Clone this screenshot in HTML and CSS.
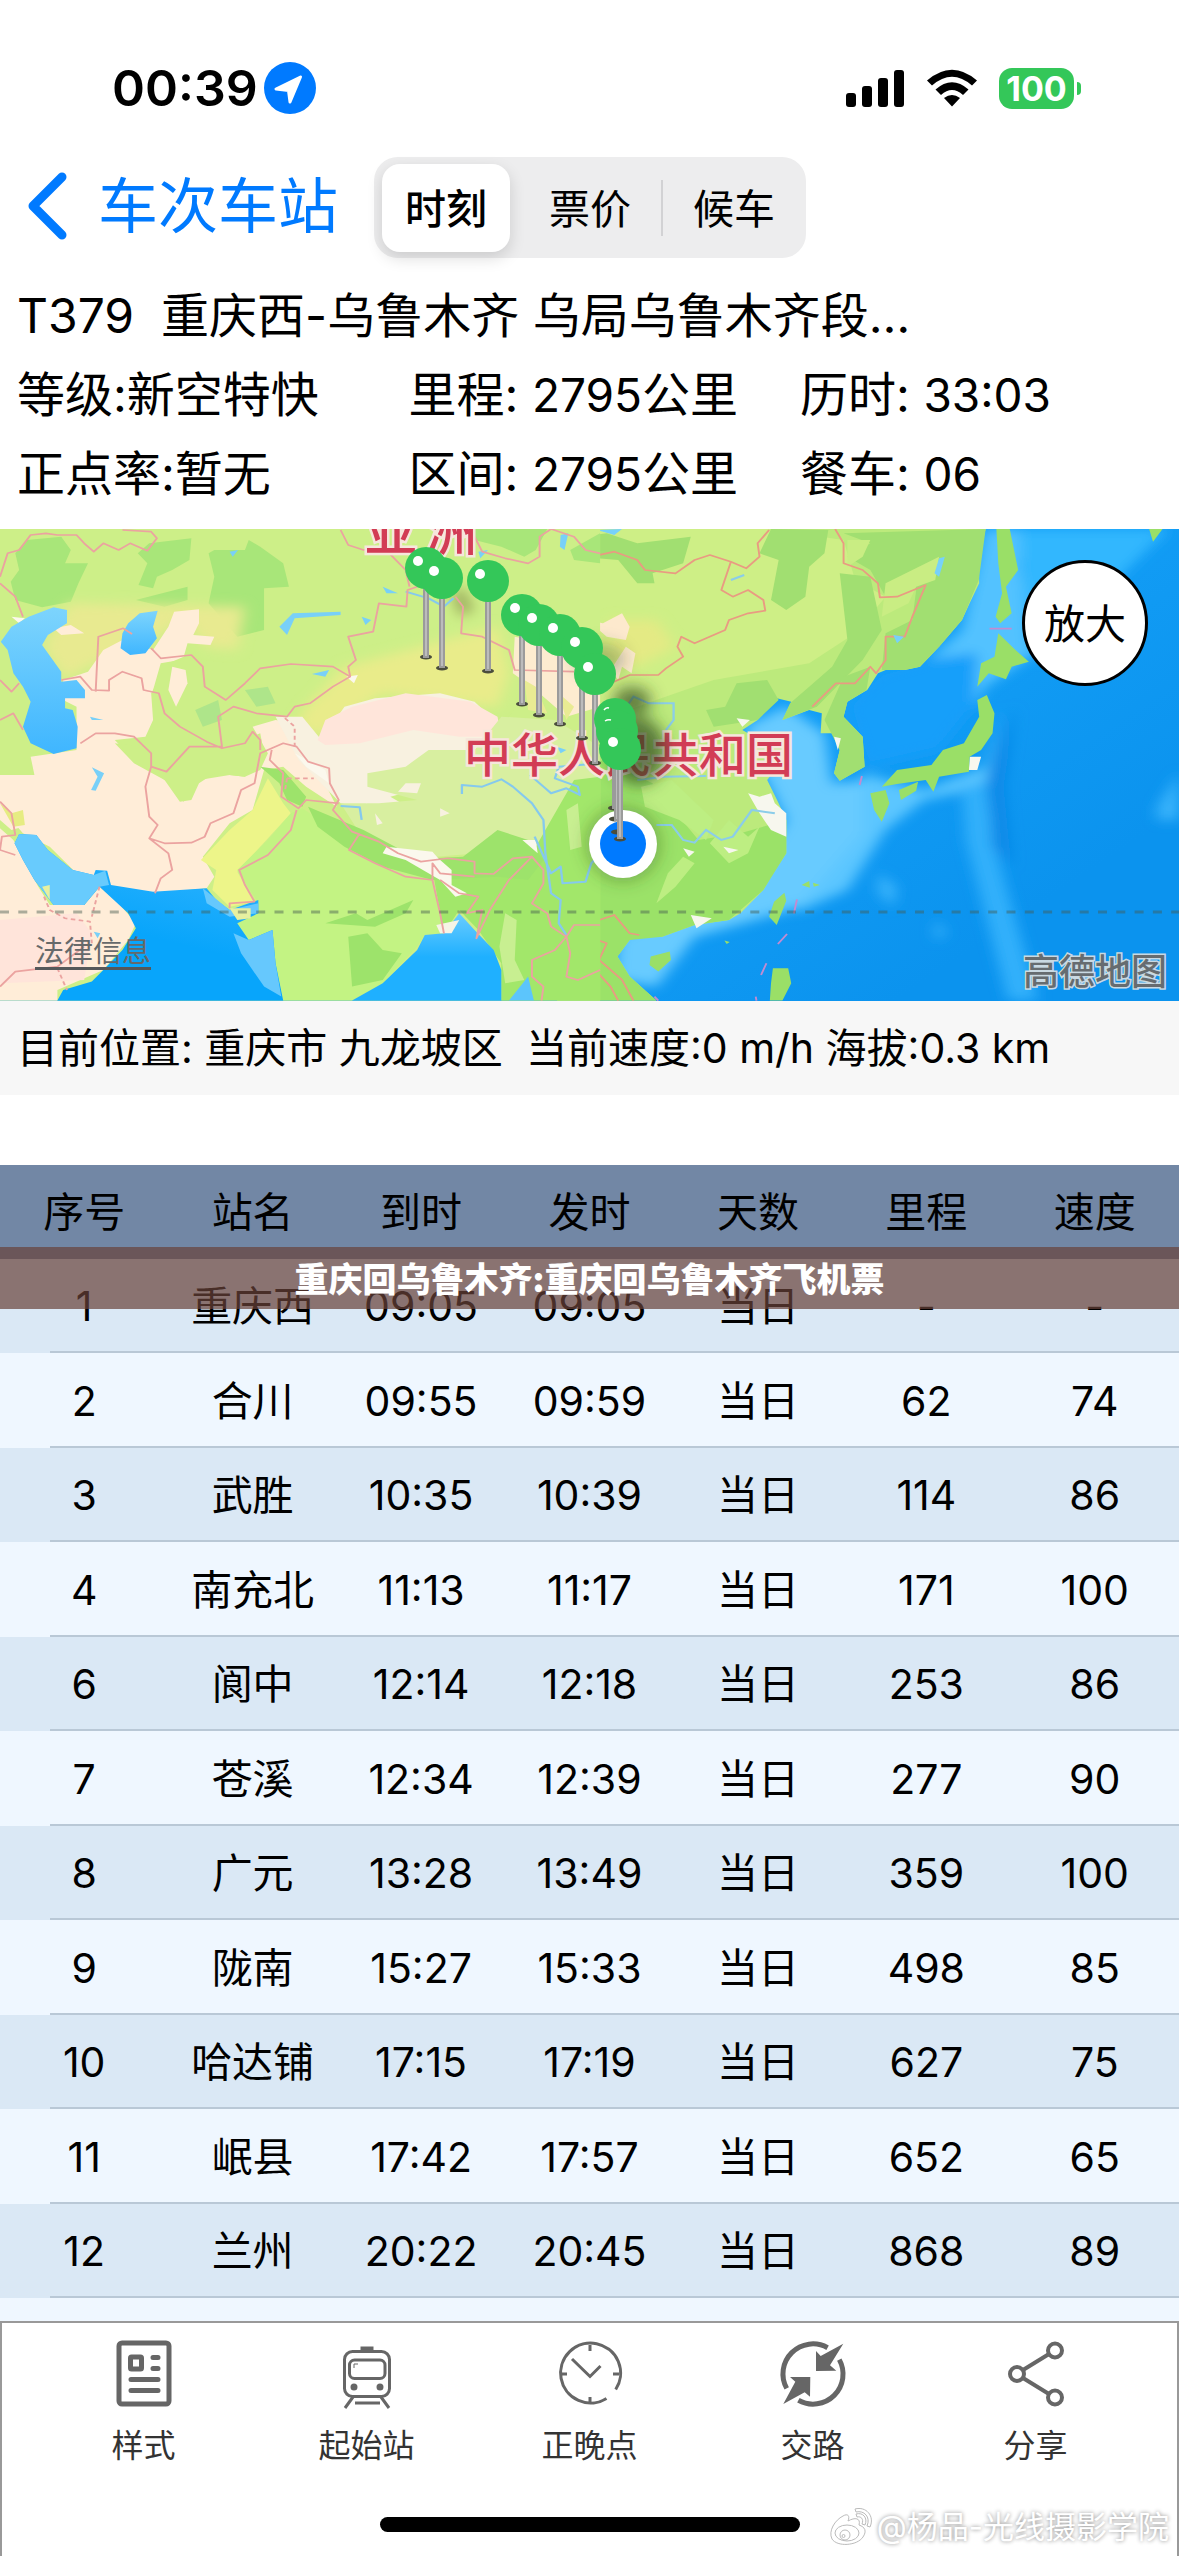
FILE: index.html
```html
<!DOCTYPE html>
<html lang="zh-CN">
<head>
<meta charset="utf-8">
<meta name="viewport" content="width=device-width, initial-scale=1">
<title>T379 时刻</title>
<link rel="stylesheet" href="styles.css">
</head>
<body>
<div class="app">
  <div class="status">
    <div class="status-side">
      <span class="clock">00:39</span>
      <svg class="locate" viewBox="0 0 52 52" aria-hidden="true"><circle cx="26" cy="26" r="26" fill="#007aff"/><path d="M36.500 15L12 27L24.500 28.500L26 40Z" fill="#fff" stroke="#fff" stroke-width="3" stroke-linejoin="round"/></svg>
    </div>
    <div class="status-side">
      <svg class="signal" viewBox="0 0 58 38" aria-hidden="true"><rect y="24" width="10" height="14" rx="3"/><rect x="16" y="17" width="10" height="21" rx="3"/><rect x="32" y="9" width="10" height="29" rx="3"/><rect x="48" y="1" width="10" height="37" rx="3"/></svg>
      <svg class="wifi" viewBox="0 0 52 38" aria-hidden="true"><path d="M1 11.500Q26-10 51 11.500L46 16.500Q26-1 6 16.500ZM9.500 20.500Q26 6 42.500 20.500L37 26Q26 16 15 26ZM18 29Q26 23 34 29L26 37.500Z"/></svg>
      <span class="battery">100</span>
    </div>
  </div>

  <header class="nav">
    <a class="back" href="#stations">
      <svg class="chevron" viewBox="0 0 40 68" aria-hidden="true"><path d="M34 5L5 34L34 63" fill="none" stroke="#007aff" stroke-width="9" stroke-linecap="round" stroke-linejoin="round"/></svg>
      <span>车次车站</span>
    </a>
    <div class="segments">
      <button class="segment segment-on" type="button" aria-pressed="true">时刻</button>
      <button class="segment" type="button">票价</button>
      <button class="segment segment-split" type="button">候车</button>
    </div>
  </header>

  <section class="info">
    <h1 class="info-title">T379  重庆西-乌鲁木齐 乌局乌鲁木齐段…</h1>
    <span>等级:新空特快</span>
    <span>里程: <span class="num">2795</span>公里</span>
    <span>历时: <span class="num">33:03</span></span>
    <span>正点率:暂无</span>
    <span>区间: <span class="num">2795</span>公里</span>
    <span>餐车: <span class="num">06</span></span>
  </section>

  <section class="map">
    <svg class="map-art" viewBox="0 0 1179 472" role="img" aria-label="线路地图">
      <defs>
        <linearGradient id="ocean" x1="0" x2="1" y1="0" y2="0.600"><stop offset="0" stop-color="#49bfff"/><stop offset="0.450" stop-color="#18a5fb"/><stop offset="1" stop-color="#0b93ee"/></linearGradient>
        <linearGradient id="gulf" x1="0.700" x2="0.300" y1="0" y2="1"><stop offset="0" stop-color="#35b5ff"/><stop offset="0.600" stop-color="#08a5fb"/></linearGradient>
        <linearGradient id="caspian" x1="0" x2="0" y1="0" y2="1"><stop offset="0" stop-color="#7dd4fd"/><stop offset="1" stop-color="#3fb6ff"/></linearGradient>
        <linearGradient id="bengal" x1="0" x2="0" y1="0" y2="1"><stop offset="0" stop-color="#6accff"/><stop offset="0.500" stop-color="#1fb0ff"/></linearGradient>
        <filter id="soft" x="-30%" y="-30%" width="160%" height="160%"><feGaussianBlur stdDeviation="18"/></filter>
        <filter id="shade" x="-80%" y="-80%" width="260%" height="260%"><feGaussianBlur stdDeviation="8"/></filter>
        <g id="pin"><rect x="-3" y="0" width="6" height="90" fill="#9b9b9b"/><rect x="-1" y="0" width="2" height="88" fill="#bcbcbc"/><circle r="21" fill="#34c759"/></g>
        <ellipse id="foot" rx="6" ry="2.500" fill="#4a4d3c"/>
      </defs>
      <rect width="1179" height="472" fill="url(#ocean)"/>

      <g transform="translate(580 -9) scale(.382 .3333)">
        <g filter="url(#soft)">
          <path d="M540 560L640 640L660 790L760 780L770 940L650 1130L520 1180L300 1250L200 1400L90 1380L100 1250L480 1000L540 900L480 760L430 620Z" fill="#68cbff"/>
          <path d="M1060 27L1180 27L1150 130L1190 400L1060 500L1030 560L1040 400L940 440L890 440L1000 330Z" fill="#52c2ff"/>
          <path d="M740 760L900 810L1060 740L1100 560L1060 800L900 840L800 930L700 1110L560 1180L740 940Z" fill="#5cc6ff"/>
          <path d="M1000 800L1060 790L1090 1000L1150 1240L1200 1442L1120 1442L1060 1180L1010 960Z" fill="#31b0fb"/>
          <path d="M1150 27L1540 27L1430 150L1220 420L1170 380Z" fill="#33b7fe"/>
          <path d="M900 420L1040 400L1030 560L940 690L750 740L700 560L780 460Z" fill="#159ffa"/>
          <path d="M1510 860L1568 760L1568 900L1510 900ZM780 1060L830 1100L820 1160L780 1120ZM930 1200L960 1240L930 1260Z" fill="#39b2fb"/>
          <path d="M1070 770L1140 560L1110 800L1130 1040L1080 980Z" fill="#0787e6"/>
        </g>
        <path d="M-60 27L1062 27L1044 110L1045 190L1020 250L1000 300L940 380L890 440L850 450L830 436L780 460L752 510L700 545L690 590L740 650L745 740L680 782L665 760L680 690L660 640L630 640L633 580L600 570L530 600L553 545L515 535L465 600L425 630L470 660L545 640L550 690L490 780L520 850L540 900L540 1000L500 1070L480 1110L420 1180L390 1200L300 1215L215 1250L170 1240L130 1260L98 1310L130 1370L200 1442L-60 1442Z" fill="#bcea7c"/>
        <path d="M0 27L490 27L690 60L720 180L800 230L720 340L600 430L350 480L250 520L50 600L0 560Z" fill="#ceef86"/>
        <g fill="#a1df71">
          <path d="M690 40L1062 27L1044 180L1000 300L940 380L890 440L850 450L790 450L800 340L870 300L880 210L800 230L760 150L700 110L760 70Z"/>
          <path d="M500 27L650 30L640 100L600 140L590 230L540 270L500 240L520 120L470 100Z"/>
          <path d="M150 70L290 50L270 130L190 160L195 190L150 190L100 120L0 110L0 50L70 40Z"/>
          <path d="M680 160L760 170L790 330L740 420L620 560L530 600L550 550L600 500L660 440L700 360Z"/>
          <path d="M410 490L490 480L520 540L465 600L350 620L330 570L380 560Z"/>
          <path d="M690 470L760 440L750 510L700 545L690 590L740 650L745 740L680 782L665 760L680 690L640 600Z"/>
        </g>
        <path d="M-60 790L60 720L190 790L260 890L310 960L420 940L540 900L540 1000L480 1110L390 1200L300 1215L215 1250L130 1260L98 1310L130 1370L200 1442L-60 1442Z" fill="#9be268"/>
        <path d="M240 780L350 900L330 960L260 900L170 860L160 800ZM390 900L440 950L470 920L440 1000L390 1030L340 970ZM270 1010L300 1030L250 1100L200 1150L230 1060Z" fill="#bdee82"/>
        <path d="M800 190L940 110L930 180L880 200L860 250L790 290ZM700 60L760 60L740 110L700 140Z" fill="#c9ed83"/>
        <path d="M80 300L200 300L250 380L150 440L60 420Z" fill="#e4ea84" filter="url(#soft)"/>
        <g fill="#fde9cd"><path d="M20 300L60 310L110 280L130 320L120 360L70 350ZM120 380L145 400L135 460L110 440L100 480L80 450Z"/></g>
        <path d="M440 820L470 830L500 820L510 850L540 880L540 950L500 930L470 880ZM410 595L445 600L425 620ZM290 1185L345 1195L305 1225ZM375 980L415 990L390 1000ZM270 985L300 995L285 1010ZM665 650L683 655L675 690ZM1020 710L1050 710L1040 750L1018 750Z" fill="#f7f7ee"/>
        <g fill="#9adf67">
          <path d="M1095 340L1140 390L1175 425L1130 440L1115 478L1070 460L1040 500L1050 430L1085 410Z"/>
          <path d="M1065 525L1085 580L1080 640L1050 690L1020 710L1018 755L940 770L925 815L905 780L830 792L790 800L830 750L920 735L950 690L1005 670L1045 590L1040 540Z"/>
          <path d="M760 820L800 810L810 850L790 905L770 870ZM835 810L885 785L880 812L840 840Z"/>
          <path d="M1090 27L1125 27L1147 150L1115 200L1130 280L1100 310L1088 290L1105 220L1095 130Z"/>
          <path d="M535 1118L540 1142L515 1215L495 1190L508 1145ZM185 1310L235 1295L238 1320L205 1355L182 1335ZM505 1345L545 1345L553 1390L530 1442L497 1442L500 1390Z"/>
          <path d="M580 1095L600 1083L602 1103ZM610 1088L628 1095L612 1100ZM378 1262L392 1266L384 1272ZM1490 27L1525 27L1500 65Z"/>
        </g>
        <g fill="none" stroke="#e99b82" stroke-width="5" stroke-linejoin="round">
          <path d="M0 85L30 110L90 95L150 120L170 150L250 160L300 120L340 105L395 125L435 145L470 110L465 70L495 30M395 125L370 210L400 230L440 210L480 240L485 272L440 280L390 300L380 330L300 370L265 350L255 380L270 410L225 445L205 465L130 465L80 490M668 27L690 70L690 130L740 150L780 190L785 232L830 230L905 195L870 290L850 350L800 350L800 420L775 460L760 440L720 490L670 490L608 560"/>
          <path d="M0 1210L50 1200L90 1185L130 1240L155 1245M0 1200L20 1250L70 1270L50 1320L110 1380L140 1442M0 1360L40 1350L80 1400L100 1442"/>
        </g>
        <g fill="none" stroke="#8bcde9" stroke-width="6"><path d="M110 580L140 530L180 550L245 550L245 600L225 630M200 915L240 915L270 960L300 968L330 930L370 960L400 950L450 870L510 880M395 180L430 165M150 780L220 770L330 768"/></g>
        <g fill="#77d1fa"><path d="M940 115L955 110L940 170L928 160ZM820 345L848 350L830 370ZM45 30L110 27L90 45Z"/></g>
        <g stroke="#c38bd1" stroke-width="5"><path d="M560 1180L568 1138M518 1272L542 1242M474 1365L488 1330M1072 326L1130 326M732 795L738 768M195 1430L205 1442M460 1430L462 1442"/></g>
      </g>

      <g transform="translate(0 -9) scale(.3827 .3333)">
        <path d="M0 27H1568V1442H0Z" fill="#cdef88"/>
        <g fill="#a8e679">
          <path d="M70 60L160 50L185 90L170 130L230 130L205 190L185 245L110 262L40 240L28 185L50 150L40 100Z"/>
          <path d="M390 70L500 55L495 120L450 150L410 170L400 205L362 195L385 130L360 100Z"/>
          <path d="M560 90L640 90L650 60L680 80L740 130L755 200L690 205L690 330L620 350L545 250L560 170L545 100Z"/>
          <path d="M355 240L490 200L490 240L430 260ZM1230 27L1430 27L1400 90L1370 110L1310 80L1240 60ZM1490 90L1568 40L1568 130L1500 120Z"/>
        </g>
        <g filter="url(#soft)">
          <path d="M180 250L640 260L620 390L540 380L480 300L350 400L250 430L170 480L110 380Z" fill="#e8ea90"/>
          <path d="M800 560L900 440L1100 380L1300 320L1330 460L1300 560L1000 520L840 650L770 620Z" fill="#e9ec8a"/>
          <path d="M1180 220L1210 200L1240 270L1200 290Z" fill="#9fb060"/>
        </g>
        <path d="M455 275L520 268L520 310L505 345L560 350L550 375L490 370L480 410L440 430L420 470L395 520L400 600L380 650L300 660L350 720L400 750L440 790L480 845L520 780L600 765L640 770L680 750L700 700L660 620L720 600L770 610L800 680L880 860L800 800L740 740L690 750L660 870L600 910L530 1010L560 1070L540 1105L400 1120L280 1100L200 1060L130 980L60 940L0 860L0 765L90 765L80 710L200 690L200 560L165 540L165 480L230 455L270 390L320 360L400 390L440 320Z" fill="#ffedd8"/>
        <path d="M140 325L185 315L220 340L160 345ZM0 850L60 880L60 920L30 930L0 900Z" fill="#ffedd8"/>
        <path d="M420 430L470 420L530 450L530 510L590 540L560 620L540 665L470 610L430 570L400 510Z" fill="#cdef88"/>
        <path d="M450 440L485 450L490 490L460 560L440 510Z" fill="#ffedd8"/>
        <path d="M0 850L30 880L60 870L65 915L35 920Z" fill="#e6ec82"/>
        <path d="M300 670L380 680L400 740L440 755L500 680L580 685L680 640L690 700L640 770L560 760L520 790L500 840L470 845L430 780L350 730Z" fill="#cdef88"/>
        <path d="M0 925L35 960L100 1100L130 1155L220 1155L260 1100L310 1150L355 1210L335 1260L270 1350L150 1410L150 1442L0 1442Z" fill="#ffedd8"/>
        <path d="M0 1200L200 1180L240 1240L220 1380L0 1390Z" fill="#ffe4da"/>
        <path d="M720 590L790 590L840 660L900 560L980 535L1150 520L1240 545L1310 620L1310 720L1180 780L1020 830L1080 870L980 870L890 850L780 720Z" fill="#f8f1e0"/>
        <path d="M830 660L850 600L920 560L1060 520L1230 545L1300 590L1310 650L1200 650L1080 630L940 670L850 675Z" fill="#ffe5da"/>
        <path d="M1345 350L1568 400L1568 560L1480 590L1390 500L1340 460Z" fill="#fdecd0"/>
        <path d="M1370 480L1400 500L1430 580L1380 570ZM1460 520L1500 560L1480 600Z" fill="#e9eb93"/>
        <path d="M960 760L1060 740L1120 690L1240 690L1310 590L1450 600L1568 680L1568 940L1450 980L1250 1000L1140 1010L1040 990L940 940L890 850L990 850L1090 840L960 800Z" fill="#d8efa0"/>
        <path d="M860 780L960 850L890 840ZM1060 790L1100 790L1090 820L1040 815ZM1150 865L1175 880L1150 890ZM980 880L1000 910L985 915Z" fill="#f8f1e0"/>
        <path d="M700 775L740 850L760 880L620 1055L665 1145L600 1160L555 1110L565 1050L525 1020L600 930L660 870Z" fill="#edf589"/>
        <path d="M790 865L900 950L1130 1060L1160 1240L1110 1245L1090 1280L1000 1390L920 1442L740 1442L720 1330L710 1230L640 1270L605 1190L670 1140L620 1050L700 960L760 880Z" fill="#c3f383"/>
        <path d="M1130 1050L1400 980L1500 780L1568 770L1568 1442L1310 1442L1310 1330L1250 1230L1200 1170L1160 1240Z" fill="#a2e76a"/>
        <path d="M805 860L950 930L1040 985L1130 1015L1210 1010L1300 930L1380 960L1420 1020L1380 1080L1300 1070L1130 1080L1000 1040L900 980L830 920Z" fill="#9de36b"/>
        <path d="M680 740L740 750L800 830L790 860L750 840L730 790ZM910 1250L960 1240L1000 1290L1050 1300L1000 1380L920 1400ZM850 1210L930 1180L960 1200L1080 1140L1060 1180L980 1220Z" fill="#9de36b"/>
        <path d="M1320 1180L1350 1200L1345 1320L1370 1380L1320 1390L1305 1280ZM1480 870L1510 850L1520 980L1490 990Z" fill="#c8ef91"/>
        <path d="M1130 995L1145 1015L1180 1050L1180 1095L1220 1120L1190 1130L1150 1080L1060 1020L1000 1000L1010 980ZM770 700L850 750L860 790L800 740ZM905 470L935 465L925 490ZM1365 960L1400 960L1405 1000ZM30 290L65 295L50 310Z" fill="#fbf8ed"/>
        <path d="M510 570L570 540L580 600L530 620ZM640 510L700 500L720 550L670 560Z" fill="#aee58a"/>
        <g fill="url(#caspian)">
          <path d="M75 290L140 262L175 270L175 310L125 345L110 375L160 455L160 485L200 480L222 510L222 535L170 535L170 565L190 570L203 620L200 685L140 702L80 670L60 620L80 545L60 500L35 460L20 390L2 365L30 320Z"/>
          <path d="M335 310L365 280L412 272L400 320L410 355L380 400L340 405L315 385L320 340Z"/>
        </g>
        <path d="M50 942L95 945L125 990L190 1050L245 1065L250 1050L280 1052L290 1095L400 1115L540 1105L565 1140L600 1170L675 1140L675 1180L620 1210L650 1260L712 1230L720 1330L740 1442L150 1442L165 1410L240 1385L270 1350L320 1290L355 1225L335 1180L260 1100L220 1155L140 1155L90 1080L60 1020L38 970Z" fill="url(#gulf)"/>
        <path d="M50 942L95 945L125 990L190 1050L245 1065L275 1052L285 1095L260 1100L220 1155L140 1155L90 1080L60 1020L38 970Z" fill="#68cbfd"/>
        <path d="M610 1240L650 1260L712 1230L720 1330L735 1430L690 1400L630 1300ZM530 1105L600 1170L675 1150L675 1180L600 1190L540 1150Z" fill="#66c8fd"/>
        <path d="M600 1165L655 1165L655 1195L620 1200ZM110 1100L130 1095L130 1140Z" fill="#e6f0a0"/>
        <path d="M1200 1180L1240 1230L1290 1290L1310 1350L1310 1442L920 1442L1000 1390L1090 1290L1110 1245L1160 1240Z" fill="url(#bengal)"/>
        <path d="M1140 1215L1200 1200L1180 1240L1150 1240Z" fill="#f6f4e6"/>
        <path d="M1330 1442L1380 1370L1395 1442Z" fill="#5cc5fc"/>
        <g fill="#78d0f8"><path d="M730 320L765 280L890 275L890 285L770 295L750 345ZM815 462L860 450L850 470ZM1000 200L1040 220L1010 220ZM945 290L970 300L955 315ZM235 590L270 600L240 600ZM240 742L272 760L250 812L238 810L255 770ZM600 95L622 90L608 110ZM1465 45L1485 40L1475 90L1463 80ZM1250 95L1275 90L1255 115ZM1455 680L1480 690L1465 700ZM245 1235L262 1240L255 1255Z"/></g>
        <g fill="none" stroke="#85c9ee" stroke-width="6" stroke-linejoin="round">
          <path d="M1207 822L1207 795L1260 800L1310 778L1340 800L1390 850L1420 900L1425 1000L1440 1120L1465 1140L1460 1210L1480 1245M1397 950L1440 1060L1465 1040L1470 1090L1530 1085L1545 1030L1568 1000M1060 215L1120 235L1160 260L1185 235M890 858L940 862L945 900M1385 765L1420 800L1440 820L1480 805L1515 825L1510 800L1450 775L1460 740L1568 730"/>
        </g>
        <g fill="none" stroke="#eba3a0" stroke-width="5" stroke-linejoin="round">
          <path d="M0 170L20 100L50 90L80 45L120 40L150 45L200 45L220 70L245 95L270 70L310 90L340 70L385 92L410 55L395 35L320 30M0 190L40 230L60 290M0 480L30 515L50 490"/>
          <path d="M250 515L257 350L322 325L345 342M160 480L210 470L240 510L285 512L285 480L320 455L370 475L375 510L415 520L430 580L470 620L540 665L580 685L640 670L660 635L680 660L680 690M395 385L420 415L500 405L530 440L535 500L590 540L640 490L680 445L760 432L870 440L915 470M210 670L250 640L300 640L350 650L395 700L395 740L435 755L495 680L580 680L570 590L610 560L670 580L750 590L770 560L810 550L870 500L915 470L910 440L930 420L910 350L975 335L990 250L1062 260L1065 210L1090 200M395 740L380 800L390 890L412 915L390 955L440 1000L450 1050L420 1075L405 1120M390 955L430 970L500 968L535 950L550 910L610 880L630 810L665 790L680 700L740 670L775 680L805 725L860 745L862 790L885 840L870 870L920 935L990 965L1040 1000L1100 1025L1170 1015L1240 1025L1240 1060L1290 1062L1340 1015L1390 1010M775 870L760 930L700 1005L625 1050L640 1095L665 1145L600 1150L600 1165M940 940L912 990L980 1030L1060 1070L1130 1080L1130 1030L1150 1060L1240 1070M1130 1080L1150 1180L1160 1240M1150 1080L1200 1120L1250 1130L1220 1180L1260 1170L1245 1255L1280 1170L1330 1080L1390 1010L1420 1050L1420 1090L1390 1150L1430 1180L1440 1220L1480 1250L1500 1215L1568 1215M1480 1250L1450 1290L1390 1320L1390 1370L1420 1400L1415 1442M1480 1250L1490 1300L1480 1370L1510 1380L1568 1350M1190 230L1210 260L1205 340L1260 350L1330 390L1345 450L1500 455M1240 50L1260 95L1320 115L1380 130L1410 110L1410 50L1440 27L1500 50L1530 90L1568 100M890 30L910 75L950 90L1000 80L1060 150L1070 200M0 600L35 580L60 630M0 845L30 880L40 945L5 950L0 990L40 1005M0 1400L40 1355L150 1340L220 1280"/>
          <path d="M115 1130L130 1170L170 1195L235 1205L240 1270M260 1100L240 1190M150 1345L175 1410M770 680L770 620L740 590M750 775L820 775M750 775L745 810" stroke-dasharray="12 9"/>
          <path d="M710 690L705 720L740 760L735 830L780 865L800 840L885 850"/>
        </g>
      </g>

      <path d="M0 383H1179" stroke="#445a50" stroke-opacity="0.450" stroke-width="3" stroke-dasharray="9 9.300"/>

      <text class="map-continent" x="365 425" y="22">亚洲</text>
      <text class="map-country" x="464" y="243">中华人民共和国</text>

      <g fill="#2f4a18" fill-opacity="0.700" filter="url(#shade)"><ellipse cx="632" cy="172" rx="19" ry="14"/><ellipse cx="638" cy="222" rx="28" ry="34"/><ellipse cx="600" cy="130" rx="26" ry="16" fill-opacity="0.300"/></g>
      <circle cx="623" cy="315" r="38" fill="#35541b" fill-opacity="0.350" filter="url(#shade)"/>
      <circle cx="623" cy="315" r="34" fill="#fff"/><circle cx="623" cy="315" r="23" fill="#007aff"/>
      <use href="#foot" x="426" y="128"/><use href="#foot" x="442" y="139"/><use href="#foot" x="488" y="142"/><use href="#foot" x="522" y="175"/><use href="#foot" x="539" y="186"/><use href="#foot" x="560" y="195"/><use href="#foot" x="582" y="209"/><use href="#foot" x="595" y="234"/><use href="#foot" x="614" y="279"/><use href="#foot" x="615" y="290"/><use href="#foot" x="617" y="303"/><use href="#foot" x="620" y="310"/>
      <use href="#pin" x="426" y="39"/><use href="#pin" x="442" y="49"/><use href="#pin" x="488" y="52"/><use href="#pin" x="522" y="86"/><use href="#pin" x="539" y="96"/><use href="#pin" x="560" y="106"/><use href="#pin" x="582" y="119"/><use href="#pin" x="595" y="145"/><use href="#pin" x="615" y="190"/><use href="#pin" x="617" y="202"/><use href="#pin" x="620" y="220"/>
      <g fill="#fff"><circle cx="418" cy="32" r="5"/><circle cx="434" cy="42" r="5"/><circle cx="480" cy="45" r="5"/><circle cx="515" cy="79" r="5"/><circle cx="532" cy="89" r="5"/><circle cx="553" cy="99" r="5"/><circle cx="575" cy="113" r="5"/><circle cx="588" cy="138" r="5"/><circle cx="613" cy="213" r="5"/></g>
      <path d="M604 181Q606 178 609 179M605 192Q608 190 611 191" fill="none" stroke="#fff" stroke-width="1.500"/>
      <text class="map-brand" x="1023" y="456">高德地图</text>
    </svg>
    <button class="zoom" type="button">放大</button>
    <a class="legal" href="#legal">法律信息</a>
  </section>

  <p class="location">目前位置: 重庆市 九龙坡区  当前速度:0 m/h 海拔:0.3 km</p>

  <main class="list">
    <table class="stops">
      <thead><tr><th>序号</th><th>站名</th><th>到时</th><th>发时</th><th>天数</th><th>里程</th><th>速度</th></tr></thead>
      <tbody>
        <tr><td>1</td><td>重庆西</td><td>09:05</td><td>09:05</td><td>当日</td><td>-</td><td>-</td></tr>
        <tr><td>2</td><td>合川</td><td>09:55</td><td>09:59</td><td>当日</td><td>62</td><td>74</td></tr>
        <tr><td>3</td><td>武胜</td><td>10:35</td><td>10:39</td><td>当日</td><td>114</td><td>86</td></tr>
        <tr><td>4</td><td>南充北</td><td>11:13</td><td>11:17</td><td>当日</td><td>171</td><td>100</td></tr>
        <tr><td>6</td><td>阆中</td><td>12:14</td><td>12:18</td><td>当日</td><td>253</td><td>86</td></tr>
        <tr><td>7</td><td>苍溪</td><td>12:34</td><td>12:39</td><td>当日</td><td>277</td><td>90</td></tr>
        <tr><td>8</td><td>广元</td><td>13:28</td><td>13:49</td><td>当日</td><td>359</td><td>100</td></tr>
        <tr><td>9</td><td>陇南</td><td>15:27</td><td>15:33</td><td>当日</td><td>498</td><td>85</td></tr>
        <tr><td>10</td><td>哈达铺</td><td>17:15</td><td>17:19</td><td>当日</td><td>627</td><td>75</td></tr>
        <tr><td>11</td><td>岷县</td><td>17:42</td><td>17:57</td><td>当日</td><td>652</td><td>65</td></tr>
        <tr><td>12</td><td>兰州</td><td>20:22</td><td>20:45</td><td>当日</td><td>868</td><td>89</td></tr>
      </tbody>
    </table>
    <p class="banner">重庆回乌鲁木齐:重庆回乌鲁木齐飞机票</p>
  </main>

  <footer class="footer">
    <nav class="tabs">
      <a class="tab" href="#style"><svg class="tab-icon" viewBox="0 0 72 72" aria-hidden="true"><rect x="11" y="5" width="50" height="61" rx="3"/><rect x="22.500" y="19" width="11" height="12" rx="1"/><path d="M45 19.500H50M45 30.500H50M23 41.500H50M23 52.500H50" stroke-linecap="round"/></svg>样式</a>
      <a class="tab" href="#origin"><svg class="tab-icon tab-icon-thin" viewBox="0 0 72 72" aria-hidden="true"><rect x="13.500" y="13.500" width="45" height="45" rx="8"/><rect x="18.500" y="22" width="35.500" height="18.500" rx="5"/><path d="M31 12V10H41V12Z"/><path d="M22 59L14 70M50 59L58 70M24 65H49"/><path d="M23 30V26H27" stroke-width="1"/><g class="solid"><circle cx="23" cy="49" r="2"/><circle cx="49" cy="49" r="2"/></g></svg>起始站</a>
      <a class="tab" href="#delay"><svg class="tab-icon tab-icon-thin" viewBox="0 0 72 72" aria-hidden="true"><path d="M52.500 60.500A30 30 0 1 1 61.700 51.500M36 7V13M36 59V65M7 36H13M59 36H65"/><path d="M18 21L36 38.500L46.500 28"/></svg>正晚点</a>
      <a class="tab" href="#routing"><svg class="tab-icon" viewBox="0 0 72 72" aria-hidden="true"><path d="M9.700 50.400A30 30 0 0 1 50.600 9.700M62.300 21.600A30 30 0 0 1 21.400 62.300"/><path class="fill" d="M39 13L43.700 18L66.300 5.700L53 27.300L59.300 32.700L39 33ZM33.300 39L13 39L18.300 43.700L6.300 66L27.700 54.300L33 58.700Z"/></svg>交路</a>
      <a class="tab" href="#share"><svg class="tab-icon" viewBox="0 0 72 72" aria-hidden="true"><g stroke-width="4"><circle cx="55" cy="12.500" r="7"/><circle cx="17" cy="36" r="7"/><circle cx="55" cy="59.500" r="7"/><path d="M23 32L49 16M23 40L49 56"/></g></svg>分享</a>
    </nav>
    <div class="home"></div>
    <div class="credit">
      <svg class="credit-logo" viewBox="0 0 44 38" aria-hidden="true"><g fill="#fff" stroke="#bbb" stroke-width="1"><path d="M14 8C19 5 21 8 19 13C26 9 32 10 30 17C36 19 38 23 34 29C28 38 8 39 3 31C-1 23 6 12 14 8Z"/><ellipse cx="18" cy="25" rx="12" ry="8"/><circle cx="16" cy="27" r="5"/><circle cx="14.500" cy="28" r="1.500"/><path d="M27 6C34 4 39 10 36 17L33 16C35 11 32 8 28 9ZM26 1C37-2 46 8 41 19L38 18C42 9 35 2 27 4Z"/></g></svg>
      <span>@杨品-光线摄影学院</span>
    </div>
  </footer>
</div>
</body>
</html>
```
FILE: styles.css
```css
* {
  box-sizing: border-box;
}

body {
  margin: 0;
  background: #fff;
  color: #000;
  font-family: Inter, "Noto Sans CJK SC", sans-serif;
  font-size: 41px;
}

h1,
p {
  margin: 0;
  font-weight: 400;
}

a {
  color: inherit;
  text-decoration: none;
}

button {
  border: 0;
  padding: 0;
  background: none;
  color: inherit;
  font: inherit;
}

svg {
  display: block;
  flex: none;
}

.app {
  display: flex;
  flex-direction: column;
  min-height: 100vh;
}

/* Status bar */
.status {
  display: flex;
  justify-content: space-between;
  padding: 62px 105px 0 112px;
}

.status-side {
  display: flex;
  align-items: center;
  height: 52px;
}

.clock {
  margin-right: 6px;
  font-size: 50px;
  font-weight: 600;
}

.locate {
  width: 52px;
  height: 52px;
}

.signal {
  width: 58px;
  height: 38px;
  margin-right: 22px;
}

.wifi {
  width: 52px;
  height: 38px;
  margin-right: 21px;
}

.battery {
  position: relative;
  width: 75px;
  border-radius: 13px;
  background: #34c759;
  color: #fff;
  font-size: 34px;
  font-weight: 700;
  line-height: 41px;
  text-align: center;
}

.battery::after {
  content: "";
  position: absolute;
  top: 14px;
  right: -7px;
  width: 4px;
  height: 13px;
  border-radius: 0 6px 6px 0;
  background: #34c759;
}

/* Navigation */
.nav {
  display: flex;
  align-items: center;
  gap: 36px;
  padding: 43px 28px 0;
}

.back {
  display: flex;
  align-items: center;
  gap: 30px;
  padding-bottom: 3px;
  color: #007aff;
  font-size: 60px;
  line-height: 80px;
}

.chevron {
  width: 40px;
  height: 68px;
}

.segments {
  display: grid;
  grid-template-columns: repeat(3, 144px);
  height: 101px;
  border-radius: 24px;
  background: #ededee;
}

.segment {
  position: relative;
  margin: 7px 8px 6px;
  padding-bottom: 4px;
}

.segment-on {
  border-radius: 18px;
  background: #fff;
  box-shadow: 0 6px 16px rgba(0, 0, 0, 0.14);
  font-weight: 500;
}

.segment-split::before {
  content: "";
  position: absolute;
  top: 16px;
  left: -9px;
  width: 2px;
  height: 56px;
  background: #d2d2d4;
}

/* Train summary */
.info {
  display: grid;
  grid-template-columns: 31fr 31fr 30fr;
  grid-auto-rows: 79px;
  padding: 18px 0 16px 17px;
  font-size: 48px;
  line-height: 79px;
  white-space: pre;
}

.info-title {
  grid-column: 1 / -1;
  font-size: 48px;
}

.num {
  font-size: 46px;
  line-height: 1;
}

/* Map */
.map {
  position: relative;
  overflow: hidden;
}

.map-art {
  width: 100%;
  height: auto;
}

.map-continent,
.map-country {
  fill: #d23c55;
  stroke: #f6e6dc;
  stroke-width: 5px;
  paint-order: stroke;
  font-weight: 500;
}

.map-continent {
  font-size: 52px;
}

.map-country {
  font-size: 47px;
}

.map-brand {
  fill: #666c70;
  stroke: #c9d9e2;
  stroke-width: 3px;
  paint-order: stroke;
  font-size: 36px;
  font-weight: 500;
}

.zoom {
  position: absolute;
  top: 31px;
  right: 31px;
  width: 126px;
  height: 126px;
  padding-bottom: 4px;
  border: 3px solid #000;
  border-radius: 50%;
  background: #fff;
}

.legal {
  position: absolute;
  bottom: 31px;
  left: 35px;
  border-bottom: 3px solid #55585a;
  color: #66696a;
  font-size: 29px;
  line-height: 30px;
}

.location {
  margin-bottom: 70px;
  padding-left: 17px;
  background: #f7f7f7;
  line-height: 94px;
  white-space: pre;
}

/* Timetable */
.list {
  position: relative;
  flex: 1;
  background: #eff7ff;
}

.stops {
  width: 100%;
  border-collapse: collapse;
  table-layout: fixed;
  line-height: 60px;
  text-align: center;
}

.stops th,
.stops td {
  height: 94px;
  padding: 0;
  font-weight: 400;
}

.stops th {
  background: #7287a5;
}

.stops tbody tr {
  background: linear-gradient(#b9c8d6, #b9c8d6) 50px 100% / 100% 2px no-repeat #dae8f5;
}

.stops tbody tr:nth-child(even) {
  background-color: #eff7ff;
}

.stops tbody tr:nth-child(even) td {
  height: 95px;
}

.banner {
  position: absolute;
  top: 82px;
  right: 0;
  left: 0;
  background: rgba(104, 66, 57, 0.7);
  color: #fff;
  font-family: "Noto Sans CJK SC", sans-serif;
  font-size: 34px;
  font-weight: 900;
  line-height: 62px;
  text-align: center;
}

/* Tab bar */
.footer {
  position: relative;
  padding: 15px 30px 24px;
  border: 2px solid #999;
  border-bottom: 0;
}

.tabs {
  display: flex;
  margin-bottom: 47px;
}

.tab {
  display: flex;
  flex: 1;
  flex-direction: column;
  align-items: center;
  gap: 12px;
  color: #333;
  font-size: 32px;
  line-height: 48px;
}

.tab-icon {
  width: 72px;
  height: 72px;
  fill: none;
  stroke: #666;
  stroke-width: 5px;
}

.tab-icon-thin {
  stroke-width: 3px;
}

.tab-icon .fill {
  fill: #666;
  stroke: none;
}

.tab-icon .solid {
  fill: #666;
}

.home {
  width: 420px;
  height: 15px;
  margin: 0 auto;
  border-radius: 8px;
  background: #000;
}

.credit {
  position: absolute;
  right: 8px;
  bottom: 6px;
  display: flex;
  align-items: center;
  gap: 4px;
  color: #fff;
  font-size: 31px;
  line-height: 46px;
  text-shadow: 0 0 4px #888;
}

.credit-logo {
  width: 44px;
  height: 38px;
}
```
